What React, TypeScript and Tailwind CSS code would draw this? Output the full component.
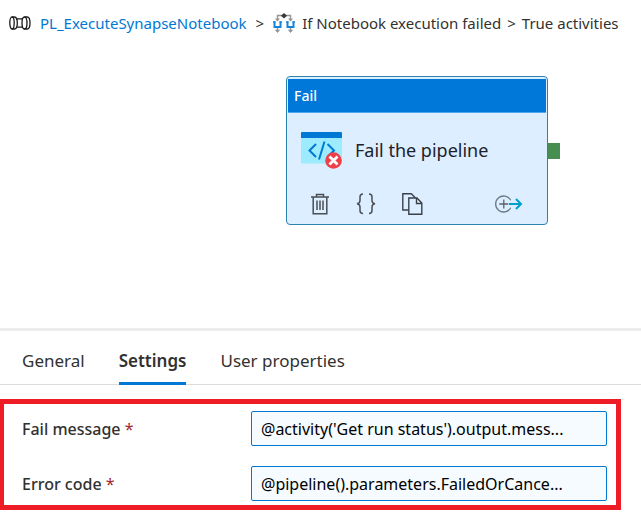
import React, { useState } from "react";

function PipelineIcon() {
  return (
    <svg width="22" height="14" viewBox="0 0 22 14" fill="none" stroke="#1b1a19" strokeWidth="1.3" aria-hidden="true">
      <ellipse cx="3" cy="7" rx="2.2" ry="6" />
      <path d="M3 1h2.500C7.200 1 8.300 3.500 8.300 7S7.200 13 5.500 13H3M8 2.800h5.500M8 11.200h5.500" />
      <path d="M15.500 1C14 1 13 3.500 13 7s1 6 2.500 6 2.500-2.500 2.500-6-1-6-2.500-6z" />
      <path d="M15.500 1h2.700C19.900 1 21 3.500 21 7s-1.100 6-2.800 6h-2.700" />
    </svg>
  );
}

function IfConditionIcon() {
  return (
    <svg width="22" height="20" viewBox="0 0 22 20" fill="none" aria-hidden="true">
      <path d="M4.500 8V2.500h13V8" stroke="#949494" strokeWidth="1.400" />
      <path d="M2 5.500h5L4.500 8.500zM15 5.500h5l-2.500 3z" fill="#949494" />
      <path d="M11 0l3 2.700-3 2.700-3-2.700z" fill="#383838" />
      <path d="M1.500 8.500v5.500h6V8.500M14.500 8.500v5.500h6V8.500" stroke="#1683db" strokeWidth="2" />
      <path d="M0 9h2.500M6.500 9h2.500M13 9h2.500M19.500 9h2.500" stroke="#1683db" strokeWidth="1.500" />
      <path d="M4.500 15v3M17.500 15v3" stroke="#949494" strokeWidth="1.400" />
      <path d="M1.800 16.800h5.400L4.500 20zM14.800 16.800h5.400L17.500 20z" fill="#949494" />
    </svg>
  );
}

function FailIcon() {
  return (
    <svg width="42" height="37" viewBox="0 0 42 37" fill="none" aria-hidden="true">
      <path d="M0 5h41v25.500a1 1 0 0 1-1 1H1a1 1 0 0 1-1-1z" fill="#9cebff" />
      <path d="M1 0h39a1 1 0 0 1 1 1v5H0V1a1 1 0 0 1 1-1z" fill="#0078d4" />
      <path d="M15 12l-6.500 6.500L15 25M26.500 12l6.500 6.500-6.500 6.500M23.500 9.500l-5.500 18" stroke="#0078d4" strokeWidth="2" />
      <circle cx="32.500" cy="28.500" r="8.300" fill="#ef404a" />
      <path d="M28.500 24.500l8 8M36.500 24.500l-8 8" stroke="#fff" strokeWidth="2.800" />
    </svg>
  );
}

function TrashIcon() {
  return (
    <svg width="18" height="22" viewBox="0 0 18 22" fill="none" stroke="#4a4f56" strokeWidth="1.500" aria-hidden="true">
      <path d="M0 4h18M5.500 4V1.500h7V4M2.200 4v16.800h13.600V4" />
      <path d="M6 7.500v9.500M9 7.500v9.500M12 7.500v9.500" />
    </svg>
  );
}

function BracesIcon() {
  return (
    <svg width="20" height="22" viewBox="0 0 20 22" fill="none" stroke="#4a4f56" strokeWidth="1.500" aria-hidden="true">
      <path d="M7 1C4.500 1 4 2 4 4v3.500C4 9.500 3.200 10.500 1 10.800c2.200.3 3 1.300 3 3.300v3.400c0 2 .5 3 3 3" />
      <path d="M13 1c2.500 0 3 1 3 3v3.500c0 2 .8 3 3 3.300-2.200.3-3 1.300-3 3.300v3.400c0 2-.5 3-3 3" />
    </svg>
  );
}

function CopyIcon() {
  return (
    <svg width="21" height="22" viewBox="0 0 21 22" fill="none" stroke="#3b4048" strokeWidth="1.400" aria-hidden="true">
      <path d="M6.500 17H.8V.8h8.500l4 4" />
      <path d="M6.800 5h8.200l4.800 5v11.200h-13zM14.500 5v5.500h5.300" />
    </svg>
  );
}

function AddOutputIcon() {
  return (
    <svg width="28" height="18" viewBox="0 0 28 18" fill="none" aria-hidden="true">
      <path d="M15.700 5.200a8 8 0 1 0 0 7.600" stroke="#6b7886" strokeWidth="1.300" />
      <path d="M8.800 4.500v9M4.300 9h9" stroke="#59626d" strokeWidth="1.300" />
      <path d="M14 9h12M21 4l5 5-5 5" stroke="#009fcc" strokeWidth="2" />
    </svg>
  );
}

function ActivityNode() {
  return (
    <article className="flex items-center">
      <div className="w-[262px] rounded-[4px] border border-[#2a84ab] bg-[#dceeff] p-px">
        <header className="mt-px flex h-[34px] items-center border-b border-[#4aa7ef] bg-[#0078d9] px-[6px] text-[14px] font-medium text-white">
          Fail
        </header>
        <div className="flex items-start gap-3 px-[13px] pt-[19px]">
          <FailIcon />
          <span className="pt-[5px] text-[18px] leading-[26px] text-[#1c2228]">Fail the pipeline</span>
        </div>
        <div className="flex items-center px-[23px] pt-[24px] pb-[8px]">
          <button aria-label="Delete"><TrashIcon /></button>
          <button aria-label="View code" className="ml-[27px]"><BracesIcon /></button>
          <button aria-label="Clone" className="ml-[26px]"><CopyIcon /></button>
          <button aria-label="Add output" className="ml-auto"><AddOutputIcon /></button>
        </div>
      </div>
      <span className="h-4 w-3 bg-[#478f50]" />
    </article>
  );
}

const tabs = ["General", "Settings", "User properties"];

function Field({ id, label, initial }: { id: string; label: string; initial: string }) {
  const [value, setValue] = useState(initial);
  return (
    <div className="flex items-center">
      <label htmlFor={id} className="w-[231px] shrink-0 pl-[2px] text-[16px] font-medium text-[#323130]">
        {label} <span className="font-normal text-[#a4262c]">*</span>
      </label>
      <input
        id={id}
        value={value}
        onChange={(e) => setValue(e.target.value)}
        className="h-[35px] min-w-0 flex-1 rounded-[2px] border border-[#0078d4] bg-[#f5fbff] px-[9px] text-[16px] text-black outline-none"
      />
    </div>
  );
}

export default function App() {
  const [active, setActive] = useState("Settings");
  return (
    <main className="bg-white font-['Noto_Sans','Open_Sans',sans-serif] text-[#323130]">
      <nav aria-label="Breadcrumb" className="flex h-[46px] items-center pl-[9px] text-[15px] whitespace-nowrap">
        <PipelineIcon />
        <a href="#pipeline" className="ml-[9px] text-[#0078d4]">PL_ExecuteSynapseNotebook</a>
        <span className="mx-[9px]">&gt;</span>
        <IfConditionIcon />
        <span className="ml-[7px]">If Notebook execution failed</span>
        <span className="mx-[6px]">&gt;</span>
        <span>True activities</span>
      </nav>

      <section aria-label="Canvas" className="flex justify-center pt-[30px] pb-[103px] pl-[205px]">
        <ActivityNode />
      </section>

      <section className="border-t-[3px] border-[#ededed]">
        <div role="tablist" className="flex h-[54px] gap-[34px] border-b border-[#dcdcdc] px-[22px] text-[17px]">
          {tabs.map((tab) => (
            <button
              key={tab}
              role="tab"
              aria-selected={tab === active}
              onClick={() => setActive(tab)}
              className={
                tab === active
                  ? "-mb-px border-b-[3px] border-[#0078d4] pt-[8px] font-semibold"
                  : "pt-[8px] pb-[2px]"
              }
            >
              {tab}
            </button>
          ))}
        </div>
        <form className="mt-[14px] mr-5 flex flex-col gap-5 border-[5px] border-l-4 border-[#ee1c24] pt-[7px] pr-[9px] pb-1 pl-4">
          <Field id="fail-message" label="Fail message" initial="@activity('Get run status').output.mess..." />
          <Field id="error-code" label="Error code" initial="@pipeline().parameters.FailedOrCance..." />
        </form>
      </section>
    </main>
  );
}
